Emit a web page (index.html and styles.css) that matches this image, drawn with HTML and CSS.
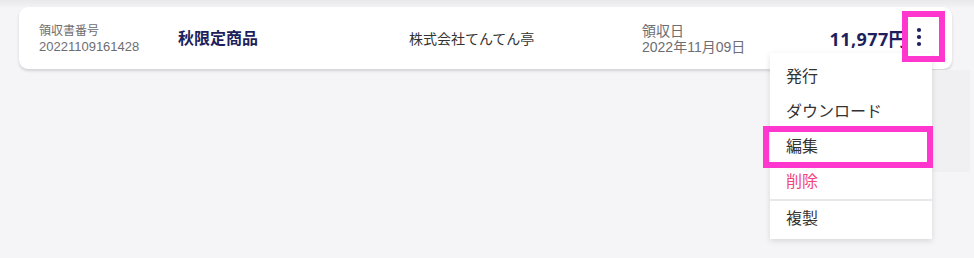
FILE: index.html
```html
<!DOCTYPE html>
<html lang="ja">
<head>
<meta charset="utf-8">
<link rel="stylesheet" href="styles.css">
</head>
<body>
<div class="page">
  <div class="card">
    <div class="col col-no">
      <div class="label">領収書番号</div>
      <div class="value">20221109161428</div>
    </div>
    <div class="col col-title">秋限定商品</div>
    <div class="col col-company">株式会社てんてん亭</div>
    <div class="col col-date">
      <div class="label">領収日</div>
      <div class="value">2022年11月09日</div>
    </div>
    <div class="amount">11,977円</div>
    <div class="kebab">
      <svg width="24" height="24" viewBox="0 0 24 24"><circle cx="12" cy="5" r="2.1"/><circle cx="12" cy="12" r="2.1"/><circle cx="12" cy="19" r="2.1"/></svg>
    </div>
  </div>
  <div class="ghost"></div>
  <div class="menu">
    <div class="item">発行</div>
    <div class="item">ダウンロード</div>
    <div class="item">編集</div>
    <div class="item danger">削除</div>
    <div class="divider"></div>
    <div class="item">複製</div>
  </div>
  <div class="hl hl-kebab"></div>
  <div class="hl hl-edit"></div>
</div>
</body>
</html>
```
FILE: styles.css
```css
* { box-sizing: border-box; }
html, body { margin: 0; padding: 0; }
body {
  width: 974px;
  height: 258px;
  overflow: hidden;
  background: #f5f5f7;
  font-family: "Noto Sans", "Noto Sans CJK JP", sans-serif;
}
.page {
  position: relative;
  height: 258px;
  padding-top: 7px;
  background: linear-gradient(#e9e9eb 0, #efeff1 5px, #f5f5f7 8px);
}
.card {
  margin: 0 22px 0 19px;
  height: 62px;
  background: #fff;
  border-radius: 9px;
  box-shadow: 0 2px 3px rgba(0,0,0,0.14);
  display: flex;
  align-items: center;
  padding: 0 21px 0 20px;
}
.col { flex: none; }
.col-no, .col-date {
  font-family: "Liberation Sans", "Noto Sans CJK JP", sans-serif;
  color: #6e6e72;
}
.col-no { width: 139px; margin-top: 1px; }
.col-no .label { font-size: 12px; line-height: 15px; }
.col-no .value { font-size: 13px; line-height: 15px; }
.col-title {
  width: 231px;
  font-size: 16px;
  font-weight: 700;
  color: #1e1f5c;
  margin-top: -2px;
}
.col-company {
  width: 233px;
  font-size: 14px;
  color: #333;
}
.col-date { width: 150px; margin-top: 1px; }
.col-date .label, .col-date .value { font-size: 14px; line-height: 16px; }
.amount {
  margin-left: auto;
  font-size: 18px;
  font-weight: 700;
  color: #1e1f5c;
  letter-spacing: 0.4px;
}
.kebab {
  width: 24px;
  height: 24px;
  margin-top: -2px;
  fill: #1e1f5c;
}
.kebab svg { display: block; }
.ghost {
  position: absolute;
  left: 932px;
  top: 70px;
  width: 38px;
  height: 102px;
  background: #f0f0f3;
}
.menu {
  position: absolute;
  left: 770px;
  top: 53px;
  width: 162px;
  height: 186px;
  background: #fff;
  box-shadow: 0 2px 6px rgba(0,0,0,0.12);
  padding: 6px 0 5px;
}
.item {
  height: 35px;
  line-height: 35px;
  padding-left: 16px;
  font-size: 16px;
  color: #333;
}
.item.danger { color: #f2457d; }
.divider {
  height: 2px;
  background: #e8e8ea;
}
.hl {
  position: absolute;
  border: 6px solid #ff37cf;
}
.hl-kebab {
  left: 902px;
  top: 11px;
  width: 43px;
  height: 51px;
}
.hl-edit {
  left: 763px;
  top: 126px;
  width: 170px;
  height: 42px;
}
```
